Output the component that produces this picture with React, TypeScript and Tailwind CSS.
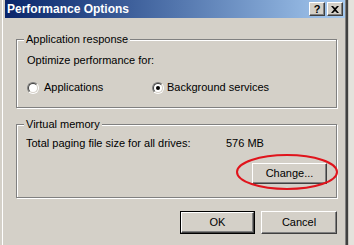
function Radio({ checked }: { checked?: boolean }) {
  return (
    <div className="w-[12px] h-[12px] rounded-full border border-t-[#808080] border-l-[#808080] border-b-white border-r-white">
      <div className="w-full h-full rounded-full border border-t-[#404040] border-l-[#404040] border-b-[#d4d0c8] border-r-[#d4d0c8] bg-white flex items-center justify-center">
        {checked && <div className="w-[4px] h-[4px] rounded-full bg-black" />}
      </div>
    </div>
  );
}

function Button({ label, w, h, isDefault }: { label: string; w: string; h: string; isDefault?: boolean }) {
  const face = (
    <div className="w-full h-full border border-t-white border-l-white border-b-[#404040] border-r-[#404040] shadow-[inset_-1px_-1px_0_#808080] flex items-center justify-center">
      {label}
    </div>
  );
  return (
    <div className={`${w} ${h} ${isDefault ? "border border-black" : ""} bg-[#d4d0c8]`}>
      {face}
    </div>
  );
}

function GroupBox({ title, className, children }: { title: string; className: string; children: React.ReactNode }) {
  return (
    <div className={`relative border border-[#808080] shadow-[inset_1px_1px_0_white,1px_1px_0_white] ${className}`}>
      <div className="absolute -top-[7px] left-[7px] px-[2px] bg-[#d4d0c8] leading-[13px]">{title}</div>
      {children}
    </div>
  );
}

export default function App() {
  return (
    <div
      className="relative w-[354px] h-[245px] overflow-hidden bg-[#d4d0c8] flex text-[11px] text-black"
      style={{ fontFamily: '"Liberation Sans", Arial, sans-serif' }}
    >
      {/* window */}
      <div className="w-[348px] h-full pl-[2px] flex">
        <div className="flex-1 border-l border-white pl-[2px] flex flex-col border-r-2 border-r-[#404040] shadow-[inset_-1px_0_0_#808080]">
          {/* title bar */}
          <div className="h-[18px] mr-[1px] bg-gradient-to-r from-[#0a246a] to-[#a6caf0] flex items-center pl-[2px] pr-[2px]">
            <span className="font-bold text-white text-[12px] leading-[14px]">Performance Options</span>
            <div className="ml-auto flex gap-[2px]">
              <div className="w-[16px] h-[14px] bg-[#d4d0c8] border border-t-white border-l-white border-b-[#404040] border-r-[#404040] shadow-[inset_-1px_-1px_0_#808080] flex items-center justify-center font-bold text-[11px] leading-none">
                ?
              </div>
              <div className="w-[16px] h-[14px] bg-[#d4d0c8] border border-t-white border-l-white border-b-[#404040] border-r-[#404040] shadow-[inset_-1px_-1px_0_#808080] flex items-center justify-center">
                <svg width="8" height="7" viewBox="0 0 8 7">
                  <path d="M0 0h2l2 2 2-2h2L5 3.5 8 7H6L4 5 2 7H0l3-3.5z" fill="black" />
                </svg>
              </div>
            </div>
          </div>

          {/* body */}
          <div className="pl-[11px] pr-[9px] pt-[21px] flex flex-col">
            <GroupBox title="Application response" className="h-[69px] pl-[10px] pt-[14px]">
              <div className="h-[13px] leading-[13px]">Optimize performance for:</div>
              <div className="mt-[14px] h-[13px] flex items-center">
                <div className="w-[125px] flex items-center gap-[5px]">
                  <Radio />
                  <span className="leading-[13px]">Applications</span>
                </div>
                <div className="flex items-center gap-[3px]">
                  <Radio checked />
                  <span className="leading-[13px]">Background services</span>
                </div>
              </div>
            </GroupBox>

            <GroupBox title="Virtual memory" className="mt-[16px] h-[74px] pl-[9px] pr-[9px] pt-[12px] flex flex-col">
              <div className="h-[13px] leading-[13px] flex">
                <span className="w-[200px]">Total paging file size for all drives:</span>
                <span>576 MB</span>
              </div>
              <div className="mt-[13px] flex justify-end">
                <Button label="Change..." w="w-[75px]" h="h-[21px]" />
              </div>
            </GroupBox>

            <div className="mt-[13px] flex justify-end gap-[6px]">
              <Button label="OK" w="w-[75px]" h="h-[23px]" isDefault />
              <Button label="Cancel" w="w-[76px]" h="h-[23px]" />
            </div>
          </div>
        </div>
      </div>
      {/* beyond the window edge */}
      <div className="flex-1 bg-[#e4e2dc] border-l border-[#c8c6c0]" />

      {/* red highlight around Change... */}
      <svg className="absolute left-[235px] top-[153px]" width="104" height="38" viewBox="0 0 104 38">
        <ellipse cx="52" cy="19" rx="50" ry="17" fill="none" stroke="#e0141c" strokeWidth="2" />
      </svg>
    </div>
  );
}
